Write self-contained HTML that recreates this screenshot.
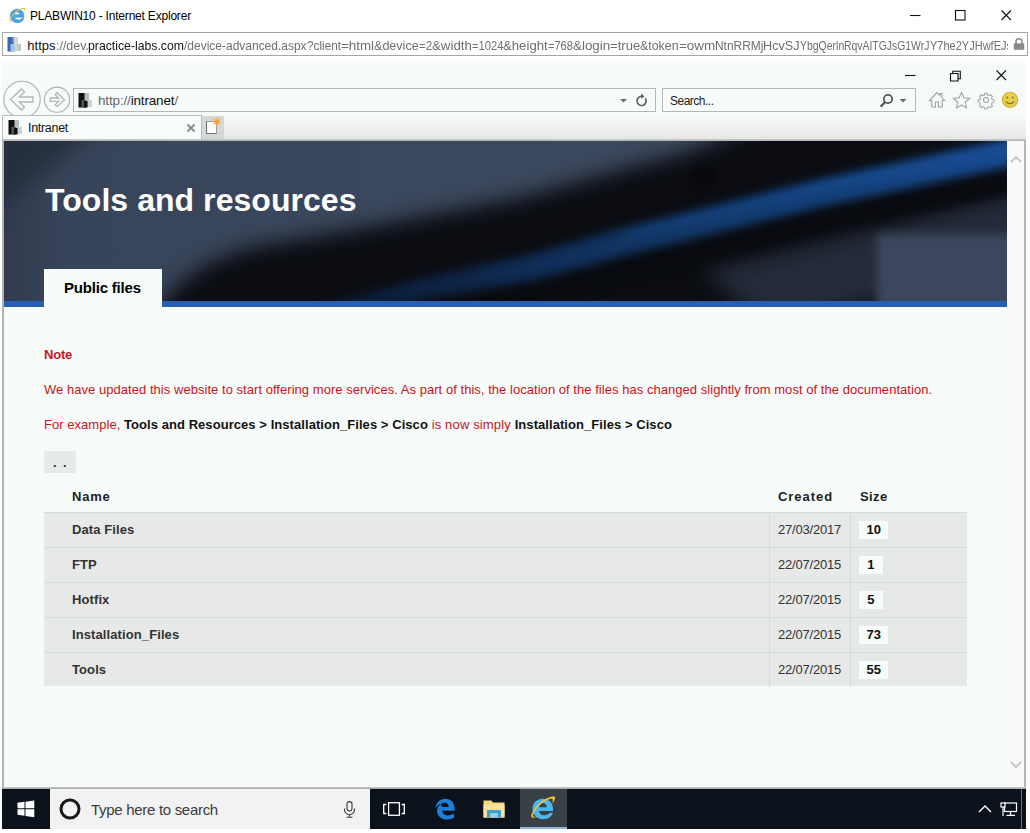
<!DOCTYPE html>
<html lang="en">
<head>
<meta charset="utf-8">
<title>PLABWIN10 - Internet Explorer</title>
<style>
html,body{margin:0;padding:0;}
body{width:1030px;height:833px;position:relative;overflow:hidden;background:#fff;font-family:"Liberation Sans",Arial,sans-serif;color:#000;}
.abs{position:absolute;}
.t{position:absolute;white-space:nowrap;line-height:1;}
svg{position:absolute;overflow:visible;}
/* outer window */
#otitle{left:30px;top:10px;font-size:12px;letter-spacing:-0.2px;color:#000;}
#oaddr{left:2px;top:32px;width:1024px;height:22px;border:1px solid #a6a6a6;background:#fff;}
#ourl{left:0;top:36px;width:1008px;height:18px;overflow:hidden;font-size:13px;}
#ourl span{position:absolute;top:2.500px;line-height:1;white-space:nowrap;color:#6e6e6e;transform-origin:0 0;}
#ourl span.u1{color:#111;}
/* remote screen */
#rd{left:2px;top:58px;width:1024px;height:771px;background:#f6faf8;}
#ieframe{left:0;top:0;width:1024px;height:82px;background:linear-gradient(#fff 0px,#fff 1px,#f6faf8 5px,#f6faf8 100%);}
#tabrow{left:0;top:57px;width:1024px;height:25px;background:linear-gradient(#f6faf8 0,#f1f4f2 10px,#e9ebea 20px,#e4e6e5 25px);}
#urlbox{left:71px;top:30px;width:581px;height:22px;border:1px solid #b4b7b5;background:#f7fbf9;}
#urltxt{left:96px;top:36px;font-size:13.5px;letter-spacing:-0.16px;color:#6a6a6a;}
#urltxt b{font-weight:normal;color:#111;}
#srchbox{left:660px;top:30px;width:252px;height:22px;border:1px solid #b4b7b5;background:#f7fbf9;}
#srchtxt{left:668px;top:37px;font-size:12px;letter-spacing:-0.5px;color:#222;}
#tab{left:0px;top:57px;width:198px;height:24px;border:1px solid #b9bcba;border-bottom:none;background:#f8fcfa;}
#tabtxt{left:26px;top:63.500px;font-size:12.500px;letter-spacing:-0.3px;color:#111;}
#newtab{left:200px;top:58px;width:22px;height:23px;background:#d6d8d7;}
/* page */
#page{left:1px;top:82px;width:1004px;height:648px;background:#f7fbf9;overflow:hidden;}
#sbar{left:1005px;top:82px;width:17px;height:648px;background:#f9fbfa;}
#banner{left:0;top:0;width:1004px;height:161px;background:#3a465b;overflow:hidden;}
#bline{left:0;top:161px;width:1004px;height:6px;background:#295fb2;}
#h1{left:42px;top:44px;font-size:32px;font-weight:bold;color:#fff;letter-spacing:0.05px;}
#ptab{left:41px;top:129px;width:118px;height:40px;background:#f7fbf9;}
#ptabtxt{left:61px;top:140px;font-size:15px;font-weight:bold;color:#000;letter-spacing:-0.2px;}
.red{color:#c8141e;}
.p{font-size:13px;letter-spacing:0.04px;}
.bk{color:#111;font-weight:bold;letter-spacing:0.06px;}
#dd{left:41px;top:311px;width:32px;height:22px;background:#e6eae8;}
.th{font-size:13px;font-weight:bold;color:#222;letter-spacing:0.2px;}
.row{position:absolute;left:41px;width:923px;height:34px;background:#e6e9e7;border-top:1px solid #d6dad8;}
.row .n{position:absolute;left:28px;top:10px;font-size:13px;font-weight:bold;color:#333;line-height:1;white-space:nowrap;letter-spacing:0.1px;}
.row .d{position:absolute;left:734px;top:10px;font-size:13px;color:#333;line-height:1;white-space:nowrap;letter-spacing:-0.2px;}
.row .v1{position:absolute;left:725px;top:0;width:1px;height:34px;background:#d6dad8;}
.row .v2{position:absolute;left:806px;top:0;width:1px;height:34px;background:#d6dad8;}
.row .s{position:absolute;left:815px;top:8px;height:18px;padding:0 7.5px;min-width:8.500px;text-align:center;background:#f7fbf9;font-size:13px;font-weight:bold;color:#111;line-height:18px;white-space:nowrap;}
/* taskbar */
#task{left:0;top:731px;width:1024px;height:40px;background:#0b121b;}
#tsearch{left:48px;top:0;width:320px;height:40px;background:#f2f2f2;}
#tstxt{left:89px;top:13px;font-size:15px;letter-spacing:-0.3px;color:#3c3c3c;}
#ieact{left:518px;top:0;width:47px;height:40px;background:#3a4146;}
#ieact i{position:absolute;left:0;bottom:0;width:47px;height:2px;background:#8fb6dc;}
</style>
</head>
<body>
<!-- OUTER WINDOW TITLE -->
<svg style="left:8px;top:5.500px" width="18.500" height="18.500" viewBox="0 0 28 28">
  <path d="M3.500 15C3.500 9 8 4.800 14 4.800C20 4.800 24 9 24 15V17H10C10.400 19.800 12.500 21.200 15.300 21.200C17.600 21.200 19.600 20.300 21 18.800H24C22.500 22.800 19 25.200 14.500 25.200C8.200 25.200 3.500 21 3.500 15zM10 13.200H17.800C17.500 10.500 16 9 13.900 9C11.800 9 10.300 10.600 10 13.200z" fill="#45a6e6" stroke="#2f86c8" stroke-width="0.800"/>
  <path d="M3 23.500C0.500 22.500 4 14.500 11.500 8.500C18 3.300 25 1.200 26 3.500C26.600 5 25 7.500 23 9.500C24 7.200 24.300 5.200 23 4.800C21 4.200 15.500 7 11 11C6 15.500 3 21 4.500 22.500C5.500 23.500 8 22.500 10.500 20.800C8 23 5 24.300 3 23.500z" fill="#e8c340"/>
</svg>
<div class="t" id="otitle">PLABWIN10 - Internet Explorer</div>
<svg style="left:905px;top:5px" width="112" height="20" viewBox="0 0 112 20" fill="none" stroke="#111" stroke-width="1.1">
  <path d="M5 10.5h10.5"/><rect x="50.5" y="5.5" width="9.5" height="9.5"/><path d="M96.5 5.5l9.5 9.5M106 5.5l-9.5 9.5"/>
</svg>
<div class="abs" id="oaddr"></div>
<svg style="left:7px;top:36px" width="15" height="16" viewBox="0 0 15 16">
  <rect x="6" y="1" width="5" height="14" fill="#d4d7da"/><rect x="10" y="8" width="4" height="7" fill="#c4c7ca"/>
  <rect x="0.5" y="1" width="6" height="14.5" fill="#3a69b4"/><rect x="3.5" y="8" width="4.5" height="7.5" fill="#a9c4e8"/>
  <rect x="5" y="1" width="1.5" height="5" fill="#5f8fd2"/>
</svg>
<div class="abs" id="ourl"><span class="u1" style="left:27.3px;transform:scaleX(1.000)">https</span><span class="u0" style="left:55.5px;transform:scaleX(0.955)">://dev.</span><span class="u1" style="left:88.4px;transform:scaleX(0.942)">practice-labs.com</span><span class="u0" style="left:184.4px;transform:scaleX(0.922)">/device-advanced.aspx</span><span class="u0" style="left:307.0px;transform:scaleX(0.905)">?client</span><span class="u0" style="left:341.0px;transform:scaleX(1.026)">=html</span><span class="u0" style="left:374.0px;transform:scaleX(0.966)">&amp;device</span><span class="u0" style="left:418.7px;transform:scaleX(0.890)">=2</span><span class="u0" style="left:431.9px;transform:scaleX(1.022)">&amp;width</span><span class="u0" style="left:471.8px;transform:scaleX(0.863)">=1024</span><span class="u0" style="left:503.3px;transform:scaleX(1.014)">&amp;height</span><span class="u0" style="left:548.0px;transform:scaleX(0.847)">=768</span><span class="u0" style="left:572.8px;transform:scaleX(1.029)">&amp;login</span><span class="u0" style="left:610.0px;transform:scaleX(1.007)">=true</span><span class="u0" style="left:640.2px;transform:scaleX(0.953)">&amp;token</span><span class="u0" style="left:678.8px;transform:scaleX(1.033)">=owm</span><span class="u0" style="left:715.0px;transform:scaleX(0.918)">NtnRRMj</span><span class="u0" style="left:763.4px;transform:scaleX(0.974)">HcvSJ</span><span class="u0" style="left:800.0px;transform:scaleX(0.805)">YbgQerln</span><span class="u0" style="left:844.2px;transform:scaleX(0.800)">RqvAITGJsG1WrJ</span><span class="u0" style="left:929.5px;transform:scaleX(0.847)">Y7he2YJHwfEJs</span></div>
<svg style="left:1013px;top:38px" width="12" height="12" viewBox="0 0 12 12">
  <path d="M3 6V3.8a3 3 0 0 1 6 0V6" fill="none" stroke="#8a8a8a" stroke-width="1.6"/><rect x="0.8" y="5.4" width="10.4" height="6.4" fill="#8a8a8a"/>
</svg>

<!-- REMOTE DESKTOP -->
<div class="abs" id="rd">
  <div class="abs" id="ieframe"></div>
  <div class="abs" id="tabrow"></div>
  <!-- inner window controls -->
  <svg style="left:898px;top:8px" width="112" height="20" viewBox="0 0 112 20" fill="none" stroke="#111" stroke-width="1.1">
    <path d="M5 9.5h10.5"/><path d="M50.5 7.5h7.5v7.5h-7.5zM52.8 7.5v-2.3h7.5v7.5h-2.3"/><path d="M96.5 4.5l9.5 9.5M106 4.5l-9.5 9.5"/>
  </svg>
  <!-- nav buttons -->
  <svg style="left:0;top:22px" width="72" height="40" viewBox="0 0 72 40" fill="none" stroke="#aeb1af" stroke-width="1.100">
    <circle cx="20" cy="19.5" r="18.2" fill="#f7fbf9"/>
    <path d="M8.5 19.5l11-10.5 3 3-5.2 5H31v5H17.3l5.2 5-3 3z" stroke="#b4b7b5" stroke-width="1.300"/>
    <circle cx="55" cy="19.7" r="12.6" fill="#f7fbf9"/>
    <path d="M62.5 19.7l-7.3-7-2 2 3.4 3.3H48.3v3.4h8.3l-3.4 3.3 2 2z" stroke="#b4b7b5" stroke-width="1.300"/>
  </svg>
  <div class="abs" id="urlbox"></div>
  <svg style="left:76px;top:34px" width="15" height="16" viewBox="0 0 15 16">
    <rect x="6" y="1" width="5" height="14" fill="#b9bcbf"/><rect x="10" y="8" width="4" height="7" fill="#cfd2d4"/>
    <rect x="0.5" y="1" width="6" height="14.5" fill="#111"/><rect x="3.5" y="8" width="4.5" height="7.5" fill="#555"/>
    <rect x="6" y="9" width="3.5" height="6.5" fill="#111"/>
  </svg>
  <div class="t" id="urltxt">http://<b>intranet</b>/</div>
  <svg style="left:617px;top:36px" width="30" height="14" viewBox="0 0 30 14">
    <path d="M1 5h7l-3.5 3.6z" fill="#6a6a6a"/>
    <path d="M26.3 4.2a4.6 4.6 0 1 1-3.2-1.9" fill="none" stroke="#5d5d5d" stroke-width="1.6"/><path d="M22 -0.3l3.6 2.6-3.6 2.5z" fill="#5d5d5d"/>
  </svg>
  <div class="abs" id="srchbox"></div>
  <div class="t" id="srchtxt">Search...</div>
  <svg style="left:876px;top:35px" width="32" height="16" viewBox="0 0 32 16">
    <circle cx="10" cy="6" r="4.2" fill="none" stroke="#555" stroke-width="1.8"/><path d="M7 9.2L2.6 13.6" stroke="#555" stroke-width="2.2"/>
    <path d="M21.5 6h7l-3.5 3.6z" fill="#6a6a6a"/>
  </svg>
  <!-- toolbar icons -->
  <svg style="left:926px;top:33px" width="92" height="18" viewBox="0 0 92 18" fill="none" stroke="#9fa2a1" stroke-width="1.1">
    <path d="M1.5 9.5L9 1.5l3 3.200V2.500h2V6.800l2.500 2.700h-2.300V16H10.500v-5H7.5v5H3.800V9.500z"/>
    <path d="M33.500 1.500l2.400 5.300 5.600.6-4.200 3.900 1.200 5.600-5-2.900-5 2.900 1.200-5.600-4.200-3.900 5.600-.6z"/>
    <g transform="translate(58 9) scale(0.92)"><circle r="2.700"/><path d="M-1.300-7.300h2.600l.5 2 1.600.7 1.800-1.100 1.800 1.800-1.100 1.800.7 1.600 2 .5v2.600l-2 .5-.7 1.600 1.100 1.800-1.800 1.800-1.800-1.100-1.600.7-.5 2h-2.600l-.5-2-1.600-.7-1.800 1.100-1.800-1.800 1.100-1.800-.7-1.600-2-.5v-2.600l2-.5.7-1.600-1.100-1.800 1.800-1.800 1.800 1.100 1.600-.7z"/></g>
    <circle cx="82" cy="8.800" r="7.600" fill="#e9cd4c" stroke="#cdb03a"/>
    <circle cx="79.300" cy="6.500" r="1" fill="#8a7424" stroke="none"/><circle cx="84.700" cy="6.500" r="1" fill="#8a7424" stroke="none"/>
    <path d="M77.800 10.500q4.200 4.200 8.400 0" stroke="#8a7424" stroke-width="1.200"/>
  </svg>
  <!-- tab -->
  <div class="abs" id="tab"></div>
  <svg style="left:6px;top:61px" width="15" height="16" viewBox="0 0 15 16">
    <rect x="6" y="1" width="5" height="14" fill="#b9bcbf"/><rect x="10" y="8" width="4" height="7" fill="#cfd2d4"/>
    <rect x="0.5" y="1" width="6" height="14.5" fill="#111"/><rect x="3.5" y="8" width="4.5" height="7.5" fill="#555"/>
    <rect x="6" y="9" width="3.500" height="6.500" fill="#111"/>
  </svg>
  <div class="t" id="tabtxt">Intranet</div>
  <svg style="left:184px;top:65px" width="10" height="10" viewBox="0 0 10 10"><path d="M1.500 1.500l7 7M8.500 1.500l-7 7" stroke="#8a8a8a" stroke-width="1.800" fill="none"/></svg>
  <div class="abs" id="newtab"></div>
  <svg style="left:201px;top:58px" width="18" height="20" viewBox="0 0 18 20">
    <path d="M3.500 5.500h10v12h-10z" fill="#fbfcfb" stroke="#9a9c9b" stroke-width="1"/>
    <path d="M3.500 5.500v12h10" fill="none" stroke="#6f7170" stroke-width="1"/>
    <path d="M13.800 1.800v8M9.800 5.800h8M11 3l5.600 5.600M16.600 3l-5.600 5.600" stroke="#f0a43a" stroke-width="1.100"/>
  </svg>
  <div class="abs" style="left:0;top:81px;width:1024px;height:2px;background:linear-gradient(#c9cccb,#b0b3b2);z-index:5"></div>
  <div class="abs" style="left:0;top:82px;width:2px;height:649px;background:#b2b4b3;z-index:5"></div>
  <div class="abs" style="left:1022px;top:82px;width:2px;height:649px;background:#b4b6b5"></div>

  <!-- PAGE -->
  <div class="abs" id="page">
    <div class="abs" id="banner">
      <svg style="left:0;top:0" width="1004" height="161" viewBox="0 0 1004 161">
        <defs>
          <filter id="b9" color-interpolation-filters="sRGB" x="-10%" y="-40%" width="120%" height="180%"><feGaussianBlur stdDeviation="10"/></filter>
          <filter id="b5" color-interpolation-filters="sRGB" x="-10%" y="-40%" width="120%" height="180%"><feGaussianBlur stdDeviation="5"/></filter>
          <filter id="b3" color-interpolation-filters="sRGB" x="-10%" y="-40%" width="120%" height="180%"><feGaussianBlur stdDeviation="3.500"/></filter>
          <linearGradient id="bg" x1="0" y1="0" x2="1" y2="0"><stop offset="0" stop-color="#303b4e"/><stop offset="0.060" stop-color="#384459"/><stop offset="0.400" stop-color="#3b475c"/><stop offset="1" stop-color="#3d495e"/></linearGradient>
          <linearGradient id="blu" x1="0" y1="0" x2="1" y2="0"><stop offset="0" stop-color="#0a1a33"/><stop offset="0.200" stop-color="#0d2444"/><stop offset="0.330" stop-color="#0f2d57"/><stop offset="0.460" stop-color="#113564"/><stop offset="0.720" stop-color="#13407a"/><stop offset="1" stop-color="#184b92"/></linearGradient>
        </defs>
        <rect width="1004" height="161" fill="url(#bg)"/>
        <path d="M-30 -30 L120 -30 L-30 90z" fill="#242c3a" filter="url(#b9)" opacity="0.800"/>
        <g filter="url(#b9)">
          <path d="M120 215 L158 166 Q182 126 250 107 L350 90 L517 58 L607 33 L685 12 L760 -20 L1040 -20 L1040 190z" fill="#0b0d12"/>
        </g>
        <g filter="url(#b9)">
          <path d="M700 131 L1030 48 L1030 190 L770 190z" fill="#242b39"/>
        </g>
        <g filter="url(#b5)">
          <path d="M790 175 L1030 108 L1030 124 L850 175z" fill="#191e28"/>
          <rect x="874" y="94" width="150" height="90" fill="#3c475d"/>
        </g>
        <g filter="url(#b5)">
          <path d="M413 170.0 L530 145.0 L627 116.0 L821 67.0 L1004 28.0 L1030 22.5 L1030 48.5 L1004 54.0 L821 93.0 L627 140.0 L530 165.0 L413 186.0z" fill="#090b10"/>
        </g>
        <g filter="url(#b5)">
          <path d="M290 176.0 L330 164.0 L367 153.0 L413 140.0 L530 114.0 L627 86.0 L821 38.0 L1004 -1.0 L1030 -6.5 L1030 21.5 L1004 27.0 L821 66.0 L627 114.0 L530 140.0 L413 160.0 L367 169.0 L330 176.0 L290 184.0z" fill="url(#blu)"/>
        </g>
        <g filter="url(#b3)" opacity="0.350">
          <path d="M627 92.0 L821 42.0 L1004 2.0 L1030 -3.5 L1030 6.5 L1004 12.0 L821 50.0 L627 96.0z" fill="#1c55a2"/>
        </g>
        <circle cx="699" cy="37" r="12" fill="#06070a" filter="url(#b5)" opacity="0.700"/>
      </svg>
    </div>
    <div class="abs" id="bline"></div>
    <div class="t" id="h1">Tools and resources</div>
    <div class="abs" id="ptab"></div>
    <div class="t" id="ptabtxt">Public files</div>

    <div class="t p red" style="left:41px;top:208px;font-weight:bold;letter-spacing:-0.2px;">Note</div>
    <div class="t p red" style="left:41px;top:243px;">We have updated this website to start offering more services. As part of this, the location of the files has changed slightly from most of the documentation.</div>
    <div class="t p red" style="left:41px;top:278px;">For example, <span class="bk">Tools and Resources &gt; Installation_Files &gt; Cisco</span><span style="letter-spacing:0.15px"> is now simply </span><span class="bk">Installation_Files &gt; Cisco</span></div>

    <div class="abs" id="dd"></div>
    <div class="t" style="left:50px;top:316px;font-size:13px;font-weight:bold;color:#333;letter-spacing:6.400px;">..</div>

    <div class="t th" style="left:69px;top:350px;letter-spacing:0.8px;">Name</div>
    <div class="t th" style="left:775px;top:350px;letter-spacing:0.95px;">Created</div>
    <div class="t th" style="left:857px;top:350px;letter-spacing:0.4px;">Size</div>

    <div class="row" style="top:372px"><span class="n">Data Files</span><i class="v1"></i><span class="d">27/03/2017</span><i class="v2"></i><span class="s">10</span></div>
    <div class="row" style="top:407px"><span class="n">FTP</span><i class="v1"></i><span class="d">22/07/2015</span><i class="v2"></i><span class="s">1</span></div>
    <div class="row" style="top:442px"><span class="n">Hotfix</span><i class="v1"></i><span class="d">22/07/2015</span><i class="v2"></i><span class="s">5</span></div>
    <div class="row" style="top:477px"><span class="n">Installation_Files</span><i class="v1"></i><span class="d">22/07/2015</span><i class="v2"></i><span class="s">73</span></div>
    <div class="row" style="top:512px;height:33px"><span class="n">Tools</span><i class="v1"></i><span class="d">22/07/2015</span><i class="v2"></i><span class="s">55</span></div>
  </div>
  <div class="abs" id="sbar">
    <svg style="left:3px;top:15px" width="12" height="8" viewBox="0 0 12 8"><path d="M1 7l5-5 5 5" fill="none" stroke="#c3c5c4" stroke-width="1.800"/></svg>
    <svg style="left:3px;top:621px" width="12" height="8" viewBox="0 0 12 8"><path d="M1 1l5 5 5-5" fill="none" stroke="#c3c5c4" stroke-width="1.800"/></svg>
  </div>
  <div class="abs" style="left:0;top:729px;width:1024px;height:2px;background:linear-gradient(#c9cccb,#a2a5a4)"></div>

  <!-- TASKBAR -->
  <div class="abs" id="task">
    <svg style="left:15px;top:11px" width="18" height="18" viewBox="0 0 18 18" fill="#fff">
      <path d="M0.500 2.800L7.500 1.800V8.300H0.500zM8.500 1.650L17.300 0.400V8.300H8.500zM0.500 9.300H7.500V15.800L0.500 14.800zM8.500 9.300H17.300V17.200L8.500 15.950z"/>
    </svg>
    <div class="abs" id="tsearch"></div>
    <svg style="left:56px;top:8px" width="24" height="24" viewBox="0 0 24 24"><circle cx="12" cy="12" r="9" fill="none" stroke="#17181a" stroke-width="3"/></svg>
    <div class="t" id="tstxt">Type here to search</div>
    <svg style="left:341px;top:12px" width="13" height="17" viewBox="0 0 13 17" fill="none" stroke="#3c3c3c" stroke-width="1.100">
      <rect x="4" y="0.600" width="5" height="9.500" rx="2.500"/><path d="M1.500 7.500v1.200a5 5 0 0 0 10 0V7.500M6.500 13.500v2.500M3.500 16.200h6"/>
    </svg>
    <svg style="left:381px;top:13px" width="22" height="14" viewBox="0 0 22 14" fill="none" stroke="#fff" stroke-width="1.300">
      <rect x="5.600" y="0.700" width="10.800" height="12.600"/><path d="M3.300 2.500H0.700v9h2.600M18.700 2.500h2.600v9h-2.600"/>
    </svg>
    <!-- Edge -->
    <svg style="left:432px;top:9px" width="22" height="22" viewBox="0 0 24 24">
      <path d="M1.500 11.500C2 5 6.500 0.800 12.500 0.800C18.800 0.800 22.500 5.500 22.500 11.500V14H9C9.300 17.300 11.800 19 15 19C17.500 19 19.800 18.200 21.800 17V21.500C19.800 22.700 17.300 23.400 14.300 23.400C7.500 23.400 3.300 19.300 3.300 13.800C3.300 10.200 5.300 7.500 8.200 5.900C7.300 7.200 8.800 9.600 8.800 9.900H16C16 7.200 14.500 5.200 11.800 5.200C7.800 5.200 3.500 7.800 1.500 11.500z" fill="#1e7ed8"/>
    </svg>
    <!-- Explorer -->
    <svg style="left:481px;top:10px" width="22" height="20" viewBox="0 0 22 20">
      <path d="M0.500 1.500h8l1.500 2h11.500v15h-21z" fill="#f4d77a"/>
      <path d="M0.500 5.500h21v13h-21z" fill="#f8e39a"/>
      <path d="M4 18.500v-7.500h14v7.500h-3.500v-4h-7v4z" fill="#3f9fd8"/>
      <rect x="7.500" y="14.500" width="7" height="4" fill="#8fd0f2"/>
    </svg>
    <div class="abs" id="ieact"><i></i></div>
    <svg style="left:527px;top:5px" width="28" height="28" viewBox="0 0 28 28">
      <path d="M3.500 15C3.500 9 8 4.800 14 4.800C20 4.800 24 9 24 15V17H10C10.400 19.800 12.500 21.200 15.300 21.200C17.600 21.200 19.600 20.300 21 18.800H24C22.500 22.800 19 25.200 14.500 25.200C8.200 25.200 3.500 21 3.500 15zM10 13.200H17.800C17.500 10.500 16 9 13.900 9C11.800 9 10.300 10.600 10 13.200z" fill="#4ab6ee"/>
      <path d="M3 23.500C0.500 22.500 4 14.500 11.500 8.500C18 3.300 25 1.200 26 3.500C26.600 5 25 7.500 23 9.500C24 7.200 24.300 5.200 23 4.800C21 4.200 15.500 7 11 11C6 15.500 3 21 4.500 22.500C5.500 23.500 8 22.500 10.500 20.800C8 23 5 24.300 3 23.500z" fill="#f0c232"/>
    </svg>
    <svg style="left:976px;top:15px" width="14" height="9" viewBox="0 0 14 9"><path d="M1 8l6-6 6 6" fill="none" stroke="#fff" stroke-width="1.400"/></svg>
    <svg style="left:998px;top:13px" width="18" height="15" viewBox="0 0 18 15" fill="none" stroke="#fff" stroke-width="1.200">
      <rect x="4.500" y="1" width="12" height="8.500"/><path d="M10.500 9.500v3.500M6.500 13.400h8.500"/><rect x="1" y="1" width="4" height="4" fill="#0b121b"/><path d="M3 5v9"/>
    </svg>
    <div class="abs" style="left:1019px;top:0;width:1px;height:40px;background:#6d7378"></div>
  </div>
</div>
</body>
</html>
